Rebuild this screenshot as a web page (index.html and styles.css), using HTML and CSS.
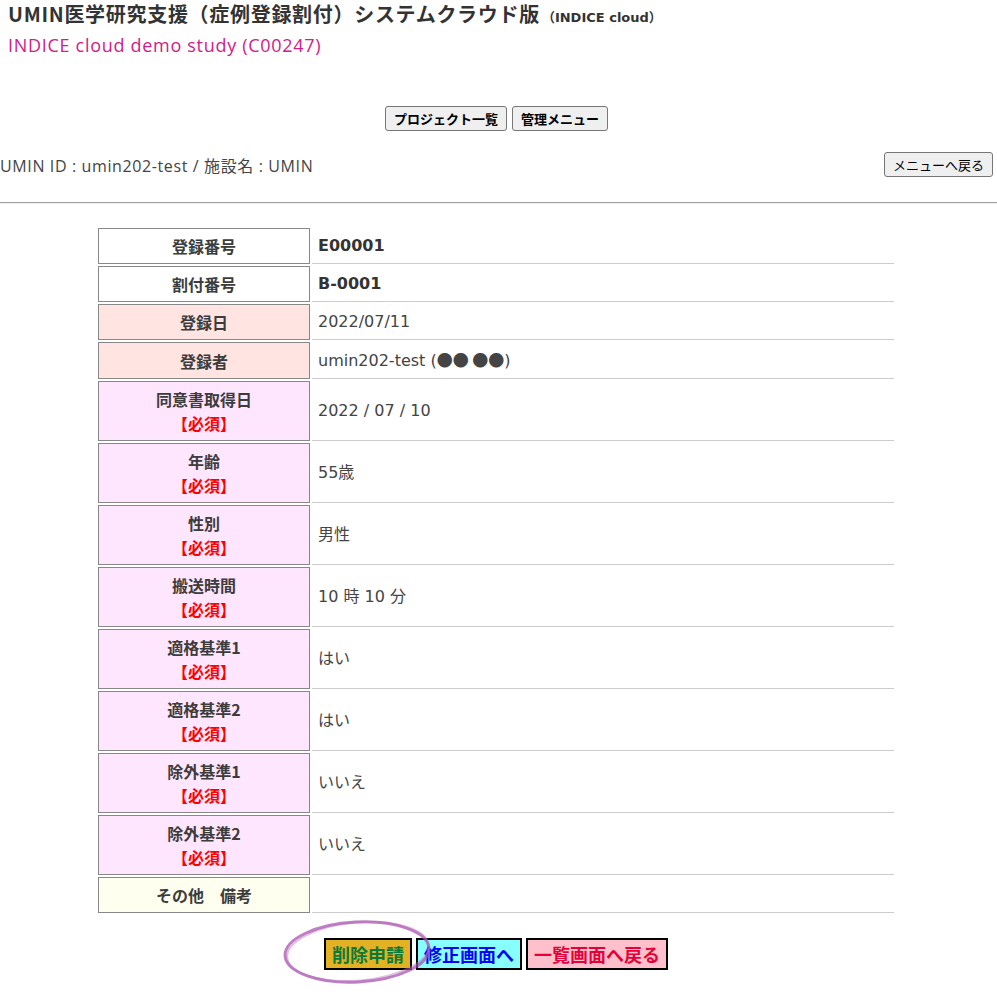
FILE: index.html
```html
<!DOCTYPE html>
<html lang="ja">
<head>
<meta charset="utf-8">
<title>INDICE cloud</title>
<link rel="stylesheet" href="styles.css">
</head>
<body>
<header class="head">
  <h1 class="title">UMIN医学研究支援（症例登録割付）システムクラウド版<span class="title-sub">（INDICE cloud）</span></h1>
  <div class="study">INDICE cloud demo study (C00247)</div>
</header>
<nav class="nav">
  <button class="btn btn-bold" type="button">プロジェクト一覧</button>
  <button class="btn btn-bold" type="button">管理メニュー</button>
</nav>
<div class="info">
  <span class="info-text">UMIN ID : umin202-test / 施設名 : UMIN</span>
  <button class="btn" type="button">メニューへ戻る</button>
</div>
<hr class="rule">
<table class="rec">
  <tr><th class="h-white">登録番号</th><td class="strong">E00001</td></tr>
  <tr><th class="h-white">割付番号</th><td class="strong">B-0001</td></tr>
  <tr><th class="h-rose">登録日</th><td>2022/07/11</td></tr>
  <tr><th class="h-rose">登録者</th><td>umin202-test (<span class="jp">●● ●●</span>)</td></tr>
  <tr><th class="h-pink">同意書取得日<br><span class="req">【必須】</span></th><td>2022 / 07 / 10</td></tr>
  <tr><th class="h-pink">年齢<br><span class="req">【必須】</span></th><td>55歳</td></tr>
  <tr><th class="h-pink">性別<br><span class="req">【必須】</span></th><td>男性</td></tr>
  <tr><th class="h-pink">搬送時間<br><span class="req">【必須】</span></th><td>10 時 10 分</td></tr>
  <tr><th class="h-pink">適格基準1<br><span class="req">【必須】</span></th><td>はい</td></tr>
  <tr><th class="h-pink">適格基準2<br><span class="req">【必須】</span></th><td>はい</td></tr>
  <tr><th class="h-pink">除外基準1<br><span class="req">【必須】</span></th><td>いいえ</td></tr>
  <tr><th class="h-pink">除外基準2<br><span class="req">【必須】</span></th><td>いいえ</td></tr>
  <tr><th class="h-ivory">その他　備考</th><td></td></tr>
</table>
<div class="actions">
  <button class="act act-del" type="button">削除申請</button>
  <button class="act act-edit" type="button">修正画面へ</button>
  <button class="act act-back" type="button">一覧画面へ戻る</button>
  <svg class="mark" width="160" height="72" viewBox="0 0 160 72" aria-hidden="true">
    <ellipse cx="76" cy="34" rx="72" ry="30" transform="rotate(-3 76 34)" fill="none" stroke="#a448aa" stroke-opacity="0.7" stroke-width="3"/>
    <ellipse cx="77" cy="33.5" rx="71" ry="29" transform="rotate(-5 77 34)" fill="none" stroke="#bb70c0" stroke-opacity="0.45" stroke-width="2"/>
  </svg>
</div>
</body>
</html>
```
FILE: styles.css
```css
html, body {
  margin: 0;
  padding: 0;
  background: #fff;
}
body {
  font-family: "DejaVu Sans", "Noto Sans CJK JP", sans-serif;
  color: #444;
  width: 997px;
  padding-bottom: 28px;
}
.head {
  padding: 0 8px;
}
.title {
  margin: 0;
  font-size: 20px;
  letter-spacing: 0.7px;
  line-height: 28px;
  font-weight: bold;
  color: #333;
  font-family: "Noto Sans CJK JP", sans-serif;
}
.title-sub {
  font-family: "DejaVu Sans", "Noto Sans CJK JP", sans-serif;
  font-size: 13px;
  letter-spacing: 0;
  font-weight: bold;
  margin-left: 2px;
}
.study {
  font-family: "Open Sans", "Noto Sans CJK JP", sans-serif;
  font-size: 18px;
  letter-spacing: 0.7px;
  line-height: 26px;
  color: #d0208a;
}
.nav {
  display: flex;
  justify-content: center;
  gap: 5px;
  margin-top: 48px;
  padding-right: 4px;
}
.btn {
  font-family: "Noto Sans CJK JP", sans-serif;
  font-size: 13px;
  height: 25px;
  padding: 0 8px;
  background: #efefef;
  color: #000;
  border: 1px solid #767676;
  border-radius: 3px;
  line-height: 1;
}
.btn-bold {
  font-weight: bold;
}
.info {
  display: flex;
  justify-content: space-between;
  align-items: center;
  margin-top: 21px;
  padding-right: 4px;
}
.info-text {
  font-family: "Open Sans", "Noto Sans CJK JP", sans-serif;
  font-size: 16px;
  letter-spacing: 0.62px;
  color: #444;
}
.rule {
  margin: 25px 0 0;
  border: 0;
  border-top: 1px solid #a0a0a0;
  border-bottom: 1px solid #eee;
  height: 0;
}
.rec {
  width: 800px;
  margin: 22px 0 0 96px;
  border-collapse: separate;
  border-spacing: 2px;
}
.rec th {
  width: 210px;
  border: 1px solid #888;
  padding: 5px 0;
  font-family: "Noto Sans CJK JP", sans-serif;
  font-size: 16px;
  line-height: 24px;
  font-weight: bold;
  color: #3c3c3c;
  text-align: center;
}
.rec td {
  border-bottom: 1px solid #ccc;
  padding: 5px 6px;
  font-size: 16px;
  line-height: 24px;
  color: #444;
}
.rec td.strong {
  font-weight: bold;
  color: #333;
}
.jp {
  font-family: "Noto Sans CJK JP", sans-serif;
}
.h-white { background: #fff; }
.h-rose { background: #ffe4e1; }
.h-pink { background: #ffe6ff; }
.h-ivory { background: #fffff0; }
.req {
  color: #ff0000;
}
.actions {
  position: relative;
  display: flex;
  justify-content: center;
  gap: 4px;
  margin-top: 23px;
  padding-right: 5px;
}
.act {
  font-family: "Noto Sans CJK JP", sans-serif;
  font-size: 18px;
  font-weight: bold;
  height: 32px;
  padding: 0 6px;
  border: 2px solid #000;
  border-radius: 0;
  line-height: 1;
}
.act-del { background: #e2b224; color: #0a7a3a; }
.act-edit { background: #88ffff; color: #0000ff; }
.act-back { background: #ffc0cb; color: #e6003a; }
.mark {
  position: absolute;
  left: 281px;
  top: -20px;
  pointer-events: none;
}
```
